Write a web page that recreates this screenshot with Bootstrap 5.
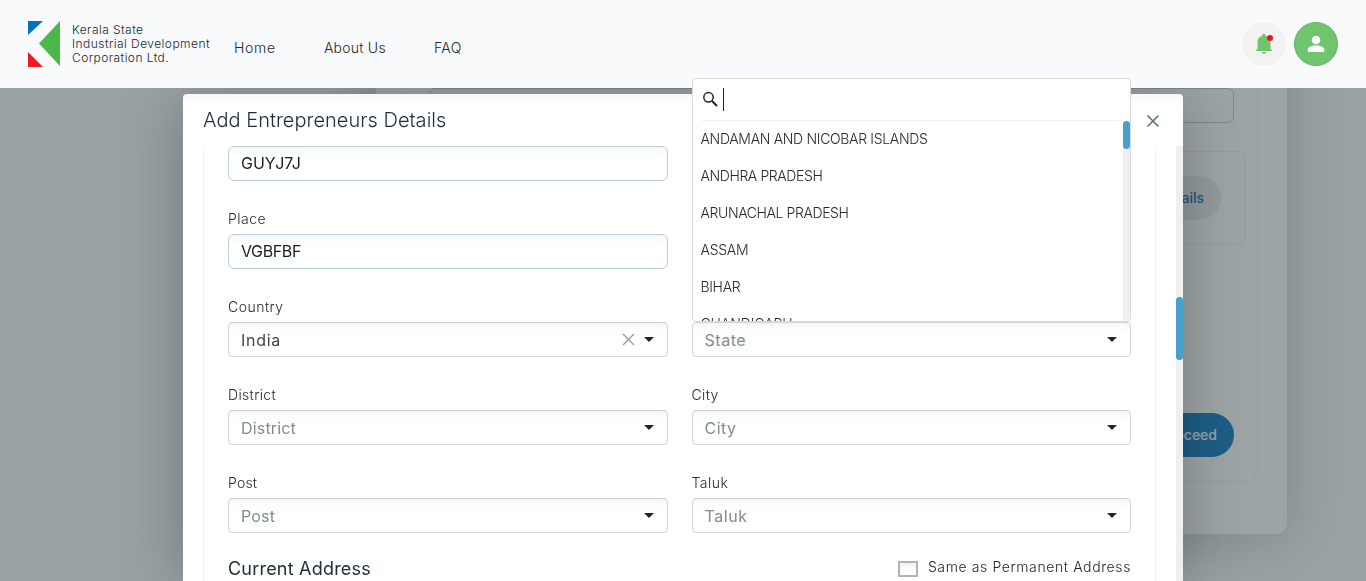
<!DOCTYPE html>
<html lang="en">
<head>
<meta charset="utf-8">
<meta name="viewport" content="width=device-width, initial-scale=1">
<title>Add Entrepreneurs Details</title>
<link href="https://cdn.jsdelivr.net/npm/bootstrap@5.3.0/dist/css/bootstrap.min.css" rel="stylesheet">
<style>
  body { font-family: Inter, sans-serif; font-weight: 300; font-size: 14px; color: #212529; height: 581px; overflow: hidden; background: #f8fafc; }
  /* header */
  .site-head { height: 88px; background: #f8fafc; z-index: 20; padding: 0 28px; }
  .logo-text { font-size: 12px; line-height: 14px; letter-spacing: .44px; margin-left: 12px; }
  .ls-home { letter-spacing: .75px; } .ls-about { letter-spacing: .24px; } .ls-faq { letter-spacing: .46px; }
  .top-link { color: #25292d; line-height: 20px; margin-top: 8px; margin-left: 48px; }
  .top-link:first-child { margin-left: 24px; }
  .round-btn { width: 44px; height: 44px; }
  .bell-btn { background: #f2f2f2; }
  .user-btn { background: #70c46d; border: 1px solid #5cb85a; }
  /* page behind the dialog */
  .page-card { width: 911px; height: 534px; margin-left: 376px; padding: 0 29px 52px; background: #fff; border-radius: 0 0 10px 10px; box-shadow: 0 4px 60px rgba(0,0,0,.22); }
  .page-inner { height: 482px; border: 1px solid #eee; border-top: 0; border-radius: 0 0 12px 12px; padding: 88px 23px 0; }
  .page-input { height: 35px; border: 1px solid #bfcad0; border-radius: 6px; }
  .page-box { height: 94px; margin: 28px -12px 0; padding-right: 24px; border: 1px solid #eee; border-radius: 10px; }
  .pill { height: 44px; border-radius: 22px; width: 150px; padding: 0 17px 2px 0; font-weight: 500; }
  .pill-details { background: #ebebeb; color: #1269b0; }
  .pill-proceed { background: #0a79c2; color: #fff; margin-top: 168px; }
  .shade { position: fixed; inset: 0; background: rgba(50,64,68,.48); }
  /* dialog */
  .dlg-wrap { position: absolute; inset: 94px 0 0 0; }
  .dlg { width: 1000px; height: 487px; background: #fff; border-radius: 4px 4px 0 0; box-shadow: 0 4px 60px rgba(0,0,0,.26), inset 0 14px 14px -12px rgba(0,0,0,.05); }
  .dlg-head { height: 52px; padding: 0 24px 0 20px; }
  .dlg-title { font-size: 20px; font-weight: 300; color: #1d2c3a; letter-spacing: .03px; line-height: 52px; }
  .dlg-close { margin-top: 2px; }
  .dlg-body { height: 435px; }
  .dlg-form { width: 953px; margin-left: 20px; border: 1px solid #f0f0f0; border-width: 0 1px; padding: 0 24px; }
  .track { width: 7px; background: #efefef; }
  .thumb { background: #479fcc; border-radius: 4px; }
  .dlg-thumb { height: 63px; margin-top: 151px; }
  .drop-thumb { height: 28px; }
  .field-row { --bs-gutter-x: 24px; margin-bottom: 28px; }
  .field-label { display: block; line-height: 20px; margin-bottom: 5px; color: #25292d; letter-spacing: .48px; }
  .field { height: 35px; border: 1px solid #ced4da; border-radius: 4px; padding: 0 12px; font-size: 16px; font-weight: 400; background: #fff; box-shadow: inset 0 7px 7px -4px rgba(0,0,0,.05); color: #7f8c93; letter-spacing: .55px; }
  .field-text { border-color: #bccdd6; border-radius: 6px; color: #1b1f23; letter-spacing: .01px; padding-bottom: 1px; }
  .field-set { color: #3f464b; letter-spacing: .72px; }
  .caret { width: 0; height: 0; border: 5px solid transparent; border-top-color: #212529; border-bottom: 0; margin-right: 1px; }
  .clear-x { margin-right: 9px; }
  .ls-d { letter-spacing: .35px; } .ls-dd { letter-spacing: .17px; } .ls-p { letter-spacing: .2px; } .ls-vg { letter-spacing: -.38px; } .ls-city { letter-spacing: .47px; }
  .addr-title { font-size: 18px; font-weight: 400; line-height: 24px; letter-spacing: .21px; color: #212f36; }
  .same { letter-spacing: .61px; line-height: 20px; }
  .box { width: 20px; height: 16px; border: 2px solid #b3b3b3; margin: 4px 10px 0 0; background: linear-gradient(#f2f2f2, #fff 60%); }
  /* open state list */
  .drop { position: absolute; left: 12px; right: 12px; bottom: 35px; height: 244px; background: #fff; border: 1px solid #d5dadd; border-radius: 4px; z-index: 30; overflow: hidden; }
  .drop-search { height: 42px; padding: 0 0 2px 9px; }
  .type-caret { width: 1px; height: 23px; background: #212529; margin-left: 4px; }
  .drop-list { height: 200px; }
  .drop-items { border-top: 1px solid #f2f2f2; margin: -1px 0 0 8px; }
  .drop-items li { height: 37px; line-height: 36px; color: #25292d; letter-spacing: -.4px; white-space: nowrap; }
  .drop-items .ls-1 { letter-spacing: -.32px; } .drop-items .ls-2 { letter-spacing: -.25px; } .drop-items .ls-3 { letter-spacing: -.11px; }
</style>
</head>
<body>
<header class="site-head fixed-top d-flex align-items-center">
  <svg width="32" height="46" viewBox="0 0 32 46" aria-hidden="true"><path fill="#0072bc" d="M0 0h15L0 14z"/><path fill="#ed1c24" d="M0 31l15 15H0z"/><path fill="#4db848" d="M32 0v45L11 22.500z"/></svg>
  <div class="logo-text">Kerala State<br>Industrial Development<br>Corporation Ltd.</div>
  <nav class="d-flex">
    <a class="top-link text-decoration-none ls-home" href="#">Home</a>
    <a class="top-link text-decoration-none ls-about" href="#">About Us</a>
    <a class="top-link text-decoration-none ls-faq" href="#">FAQ</a>
  </nav>
  <div class="d-flex gap-2 ms-auto">
    <span class="round-btn bell-btn rounded-circle d-flex align-items-center justify-content-center">
      <svg width="18" height="22" viewBox="0 0 18 22"><path fill="#70c46d" d="M1 18v-1.500h1.500V9c0-3.500 2-5.500 4.800-6.200V2a1.500 1.500 0 0 1 3 0v.8C13.500 3.500 15.500 5.500 15.500 9v7.500H17V18zM7 19h4a2 2 0 0 1-4 0z"/><circle cx="15" cy="5" r="3" fill="#e4132f"/></svg>
    </span>
    <span class="round-btn user-btn rounded-circle d-flex align-items-center justify-content-center">
      <svg width="18" height="18" viewBox="0 0 18 18" fill="#fff"><circle cx="9" cy="5" r="4.300"/><path d="M.5 15.500c0-3.500 3.500-5 8.500-5s8.500 1.500 8.500 5c0 1-.4 1.500-1.500 1.500H2C.9 17 .5 16.500.5 15.500z"/></svg>
    </span>
  </div>
</header>

<main class="page-card">
  <div class="page-inner">
    <div class="page-input"></div>
    <div class="page-box d-flex align-items-center justify-content-end"><span class="pill pill-details d-flex align-items-center justify-content-end">Add Details</span></div>
    <div class="d-flex justify-content-end"><span class="pill pill-proceed d-flex align-items-center justify-content-end">Proceed</span></div>
  </div>
</main>
<div class="shade"></div>

<div class="dlg-wrap">
  <div class="dlg mx-auto">
    <div class="dlg-head d-flex justify-content-between align-items-center">
      <h1 class="dlg-title mb-0">Add Entrepreneurs Details</h1>
      <svg class="dlg-close" width="12" height="12" viewBox="0 0 12 12" stroke="#566b78" stroke-width="1.500"><path d="M.5.5l11 11M11.500.5l-11 11"/></svg>
    </div>
    <div class="dlg-body d-flex">
      <div class="dlg-form">
        <div class="row field-row">
          <div class="col-6"><div class="field field-text d-flex align-items-center">GUYJ7J</div></div>
        </div>
        <div class="row field-row">
          <div class="col-6"><label class="field-label">Place</label><div class="field field-text ls-vg d-flex align-items-center">VGBFBF</div></div>
        </div>
        <div class="row field-row">
          <div class="col-6"><label class="field-label">Country</label>
            <div class="field field-set d-flex align-items-center"><span class="me-auto">India</span>
              <svg class="clear-x" width="13" height="13" viewBox="0 0 13 13" stroke="#999" stroke-width="1.300"><path d="M1 1l11 11M12 1L1 12"/></svg><i class="caret"></i></div>
          </div>
          <div class="col-6 position-relative pt-4 mt-auto">
            <div class="field d-flex align-items-center justify-content-between"><span>State</span><i class="caret"></i></div>
            <div class="drop">
              <div class="drop-search d-flex align-items-center">
                <svg width="17" height="17" viewBox="0 0 17 17" fill="none" stroke="#212529"><circle cx="6.500" cy="6.300" r="4.700" stroke-width="1.500"/><path d="M10 10l5 5" stroke-width="2"/></svg>
                <span class="type-caret"></span>
              </div>
              <div class="drop-list d-flex">
                <ul class="drop-items list-unstyled flex-grow-1">
                  <li class="ls-1">ANDAMAN AND NICOBAR ISLANDS</li>
                  <li>ANDHRA PRADESH</li>
                  <li>ARUNACHAL PRADESH</li>
                  <li class="ls-2">ASSAM</li>
                  <li class="ls-1">BIHAR</li>
                  <li class="ls-3">CHANDIGARH</li>
                </ul>
                <div class="track"><div class="thumb drop-thumb"></div></div>
              </div>
            </div>
          </div>
        </div>
        <div class="row field-row">
          <div class="col-6"><label class="field-label ls-d">District</label><div class="field ls-dd d-flex align-items-center justify-content-between"><span>District</span><i class="caret"></i></div></div>
          <div class="col-6"><label class="field-label ls-d">City</label><div class="field ls-city d-flex align-items-center justify-content-between"><span>City</span><i class="caret"></i></div></div>
        </div>
        <div class="row field-row mb-4">
          <div class="col-6"><label class="field-label ls-p">Post</label><div class="field ls-dd d-flex align-items-center justify-content-between"><span>Post</span><i class="caret"></i></div></div>
          <div class="col-6"><label class="field-label">Taluk</label><div class="field d-flex align-items-center justify-content-between"><span>Taluk</span><i class="caret"></i></div></div>
        </div>
        <div class="d-flex justify-content-between align-items-start">
          <h2 class="addr-title mb-0">Current Address</h2>
          <label class="same d-flex"><span class="box"></span>Same as Permanent Address</label>
        </div>
      </div>
      <div class="track ms-auto"><div class="thumb dlg-thumb"></div></div>
    </div>
  </div>
</div>
<script src="https://cdn.jsdelivr.net/npm/bootstrap@5.3.0/dist/js/bootstrap.bundle.min.js"></script>
</body>
</html>
